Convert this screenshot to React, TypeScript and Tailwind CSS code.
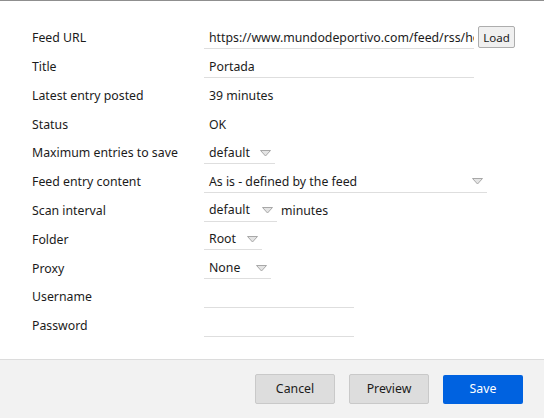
import React from 'react';

const Arrow = () => (
  <svg width="11" height="7" viewBox="0 0 11 7" className="shrink-0">
    <polygon points="0.5,0.5 10.5,0.5 5.5,6" fill="#e4e4e4" stroke="#a8a8a8" strokeWidth="1" />
  </svg>
);

const Select = ({ value, width }: { value: string; width: string }) => (
  <div className={`flex items-center justify-between h-[21px] pl-[5px] pr-[4px] border-b border-[#dedede] ${width}`}>
    <span>{value}</span>
    <Arrow />
  </div>
);

const Row = ({ label, children }: { label: string; children?: React.ReactNode }) => (
  <div className="flex items-center h-[28.8px]">
    <div className="w-[172px] shrink-0">{label}</div>
    <div className="flex items-center">{children}</div>
  </div>
);

export default function App() {
  return (
    <div
      className="w-[544px] h-[418px] flex flex-col bg-white text-[12.3px] text-[#1b1b1b] border-t border-[#8f8f8f]"
      style={{ fontFamily: '"Noto Sans", sans-serif' }}
    >
      {/* Form */}
      <div className="flex-1 pt-[23px] pl-[32px]">
        <Row label="Feed URL">
          <input
            readOnly
            value="https://www.mundodeportivo.com/feed/rss/home"
            className="w-[270px] h-[21px] pl-[5px] border-b border-[#dedede] outline-none bg-transparent"
          />
          <button className="ml-[4px] mb-[2px] w-[37px] h-[22px] flex items-center justify-center text-[11.5px] bg-[#f0f0f0] border border-[#adadad] rounded-[2px]">
            Load
          </button>
        </Row>
        <Row label="Title">
          <input
            readOnly
            value="Portada"
            className="w-[270px] h-[21px] pl-[5px] border-b border-[#dedede] outline-none bg-transparent"
          />
        </Row>
        <Row label="Latest entry posted">
          <span className="pl-[5px]">39 minutes</span>
        </Row>
        <Row label="Status">
          <span className="pl-[5px]">OK</span>
        </Row>
        <Row label="Maximum entries to save">
          <Select value="default" width="w-[71px]" />
        </Row>
        <Row label="Feed entry content">
          <Select value="As is - defined by the feed" width="w-[283px]" />
        </Row>
        <Row label="Scan interval">
          <Select value="default" width="w-[73px]" />
          <span className="ml-[4px]">minutes</span>
        </Row>
        <Row label="Folder">
          <Select value="Root" width="w-[58px]" />
        </Row>
        <Row label="Proxy">
          <Select value="None" width="w-[67px]" />
        </Row>
        <Row label="Username">
          <div className="w-[150px] h-[21px] border-b border-[#dedede]" />
        </Row>
        <Row label="Password">
          <div className="w-[150px] h-[21px] border-b border-[#dedede]" />
        </Row>
      </div>

      {/* Footer */}
      <div className="h-[59px] bg-[#f2f2f2] border-t border-[#dcdcdc] flex items-center justify-end gap-[14px] pr-[21px]">
        <button className="w-[80px] h-[30px] bg-[#dddddd] border border-[#c9c9c9] rounded-[2px]">Cancel</button>
        <button className="w-[80px] h-[30px] bg-[#dddddd] border border-[#c9c9c9] rounded-[2px]">Preview</button>
        <button className="w-[80px] h-[29px] bg-[#0062e0] text-white rounded-[2px]">Save</button>
      </div>
    </div>
  );
}
